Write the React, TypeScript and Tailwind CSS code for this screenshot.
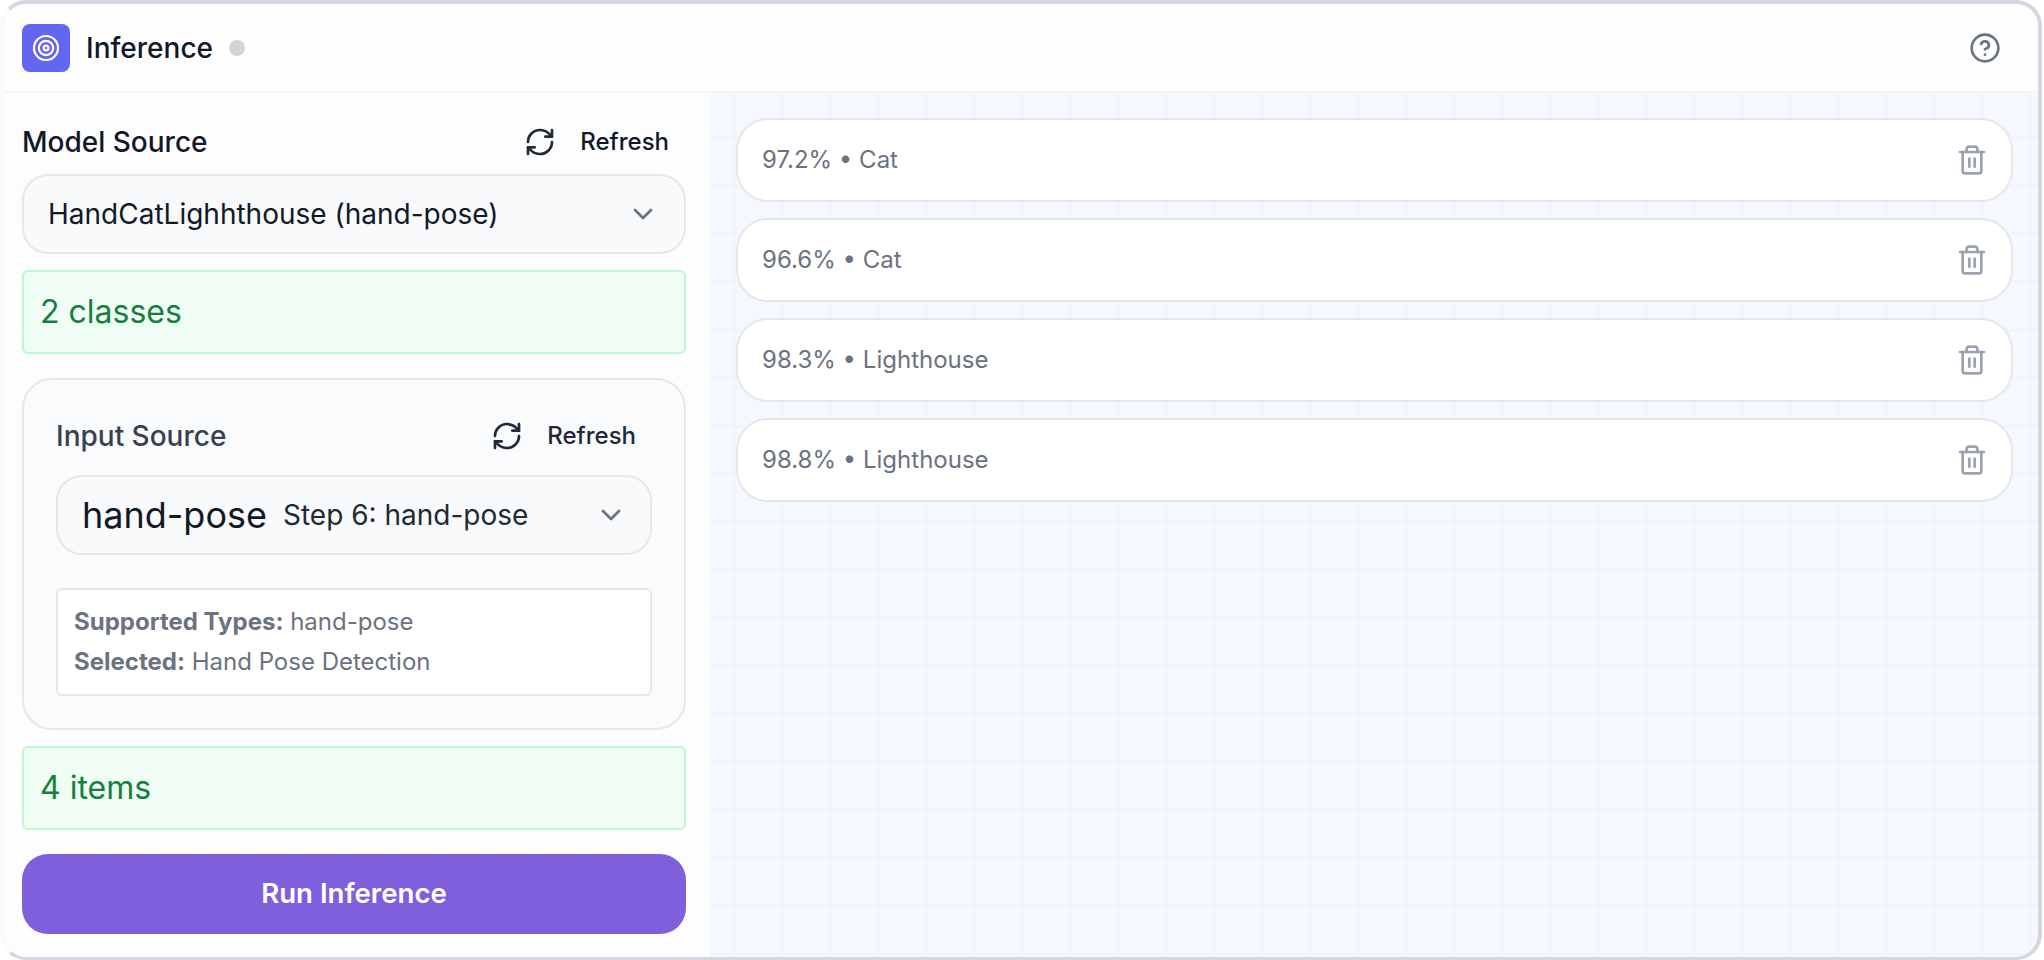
import { RefreshCw, ChevronDown, CircleHelp, Trash2 } from "lucide-react";

const items = ["97.2% • Cat", "96.6% • Cat", "98.3% • Lighthouse", "98.8% • Lighthouse"];

function Target() {
  return (
    <svg width="48" height="48" viewBox="0 0 48 48" fill="none" stroke="white" strokeWidth="2.2">
      <circle cx="24" cy="24" r="12" />
      <circle cx="24" cy="24" r="7.2" />
      <circle cx="24" cy="24" r="2.4" />
    </svg>
  );
}

function Refresh({ text }: { text: string }) {
  return (
    <button className={`flex items-center gap-[24px] text-[24px] leading-[32px] font-medium ${text}`}>
      <RefreshCw size={32} strokeWidth={2} className="text-[#1f2937]" />
      <span>Refresh</span>
    </button>
  );
}

export default function App() {
  return (
    <div className="h-[960px] w-[2044px] bg-white pr-[2px] font-['Inter',sans-serif]">
      <div className="flex h-full w-full flex-col overflow-hidden rounded-[26px] border-t-[4px] border-r-[4px] border-b-[3px] border-l-[4px] border-t-[#d4d6e0] border-r-[#d4d6e0] border-b-[#d4d6e0] border-l-[#fafafc] bg-[#f5f8fe] bg-[linear-gradient(to_right,#eff3fc_2px,transparent_2px),linear-gradient(to_bottom,#eff3fc_2px,transparent_2px)] bg-size-[48px_48px] bg-position-[9px_37px]">
        <header className="flex h-[89px] shrink-0 items-center justify-between border-b-2 border-[#f3f5f9] bg-white/90 pr-[37px] pl-[18px]">
          <div className="flex items-center">
            <div className="flex h-[48px] w-[48px] items-center justify-center rounded-[8px] bg-[#6366f1]">
              <Target />
            </div>
            <h1 className="ml-[16px] text-[28px] leading-[36px] font-medium text-[#111827]">Inference</h1>
            <span className="ml-[16px] h-[16px] w-[16px] rounded-full bg-[#d1d5db]" />
          </div>
          <CircleHelp size={32} strokeWidth={2} className="text-[#6b7280]" />
        </header>
        <div className="flex min-h-0 flex-1">
          <aside className="flex w-[706px] shrink-0 flex-col bg-white/75 pt-[31px] pr-[24px] pl-[18px]">
            <div className="flex h-[36px] items-center justify-between pr-[17px]">
              <span className="text-[28px] font-medium text-[#111827]">Model Source</span>
              <Refresh text="text-[#111827]" />
            </div>
            <div className="mt-[14px] flex h-[80px] items-center justify-between rounded-[26px] border-2 border-[#e5e7eb] bg-[#f9fafb] pr-[25px] pl-[24px] text-[28px] text-[#111827]">
              <span>HandCatLighhthouse (hand-pose)</span>
              <ChevronDown size={32} strokeWidth={2} className="text-[#6b7280]" />
            </div>
            <div className="mt-[16px] flex h-[84px] items-center rounded-[6px] border-2 border-[#bbf7d0] bg-[#f0fdf4] pl-[16px] text-[32px] text-[#15803d]">
              2 classes
            </div>
            <section className="mt-[24px] h-[352px] rounded-[30px] border-2 border-[#e5e7eb] bg-[#f9fafb]/80 px-[32px] pt-[38px]">
              <div className="flex h-[36px] items-center justify-between pr-[16px]">
                <span className="text-[28px] font-medium text-[#374151]">Input Source</span>
                <Refresh text="text-[#1f2937]" />
              </div>
              <div className="mt-[21px] flex h-[80px] items-center justify-between rounded-[26px] border-2 border-[#e5e7eb] bg-[#f9fafb] pr-[23px] pl-[24px] text-[#111827]">
                <span className="flex items-center gap-[16px]">
                  <span className="text-[36px]">hand-pose</span>
                  <span className="text-[28px] text-[#1f2937]">Step 6: hand-pose</span>
                </span>
                <ChevronDown size={32} strokeWidth={2} className="text-[#6b7280]" />
              </div>
              <div className="mt-[33px] h-[108px] rounded-[6px] border-2 border-[#e5e7eb] bg-white px-[16px] pt-[12px] text-[24px] leading-[40px] text-[#6b7280]">
                <div><strong className="font-bold">Supported Types:</strong> hand-pose</div>
                <div><strong className="font-bold">Selected:</strong> Hand Pose Detection</div>
              </div>
            </section>
            <div className="mt-[16px] flex h-[84px] items-center rounded-[6px] border-2 border-[#bbf7d0] bg-[#f0fdf4] pl-[16px] text-[32px] text-[#15803d]">
              4 items
            </div>
            <button className="mt-[24px] h-[80px] rounded-[26px] bg-[#805fdc] text-[27.6px] font-semibold text-white">
              Run Inference
            </button>
          </aside>
          <main className="flex min-w-0 flex-1 flex-col gap-[16px] pt-[25px] pr-[25px] pl-[26px]">
            {items.map((t) => (
              <div key={t} className="flex h-[84px] items-center justify-between rounded-[32px] border-2 border-[#e5e7eb] bg-white pr-[23px] pl-[24px] text-[24px] text-[#6b7280]">
                <span>{t}</span>
                <Trash2 size={32} strokeWidth={2} className="text-[#9ca3af]" />
              </div>
            ))}
          </main>
        </div>
      </div>
    </div>
  );
}
